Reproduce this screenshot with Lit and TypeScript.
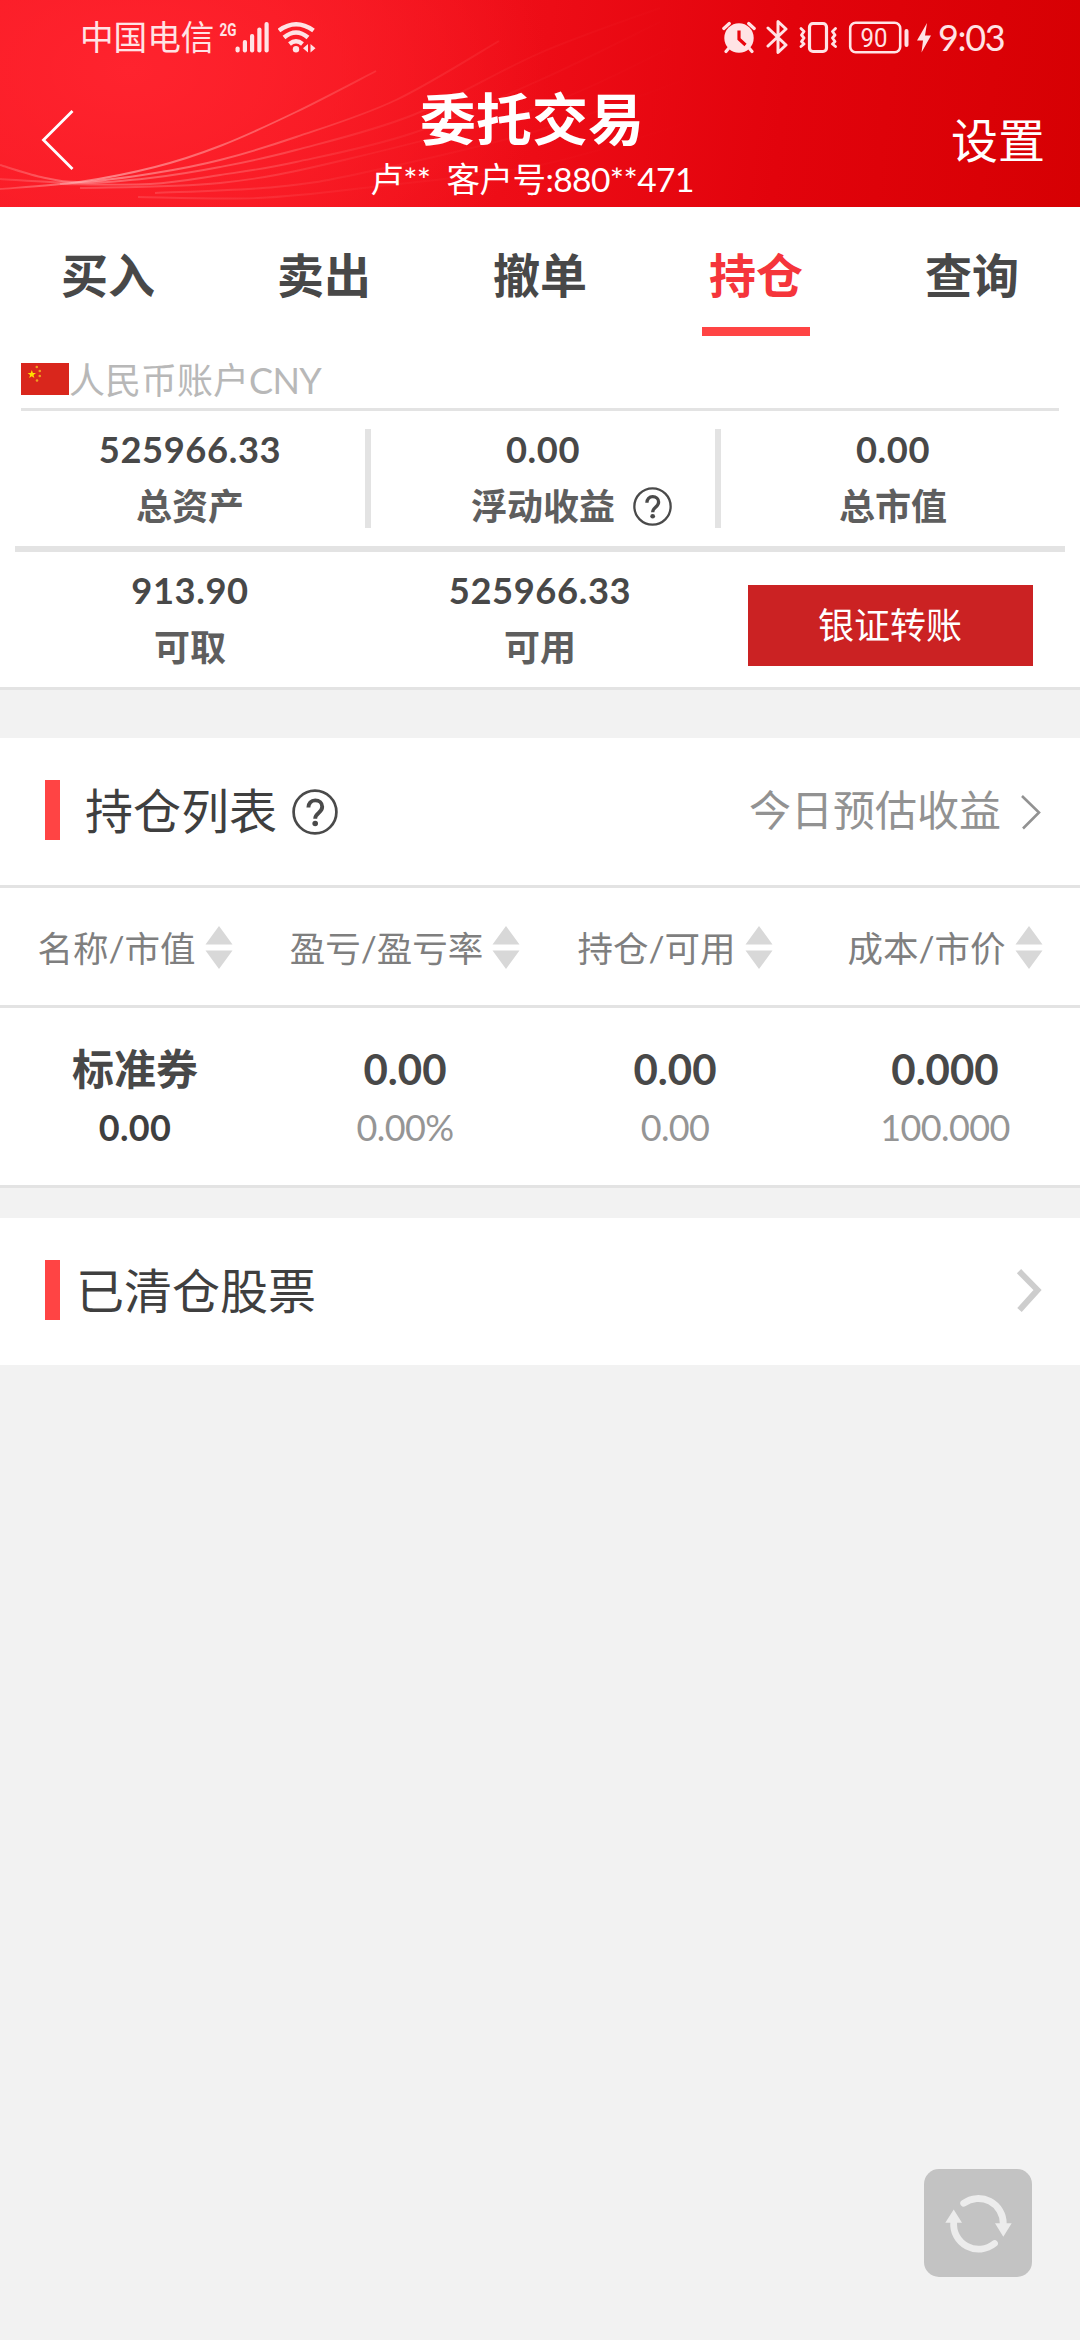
import { LitElement, html, css, svg } from "lit";
import { customElement, property } from "lit/decorators.js";
import { classMap } from "lit/directives/class-map.js";

type Point = [number, number];

/** Smooth path through a list of points (Catmull-Rom as cubic segments). */
function smooth(points: Point[]): string {
  let d = `M${points[0][0]} ${points[0][1]}`;
  for (let i = 0; i < points.length - 1; i++) {
    const p0 = points[Math.max(i - 1, 0)];
    const p1 = points[i];
    const p2 = points[i + 1];
    const p3 = points[Math.min(i + 2, points.length - 1)];
    d += `C${p1[0] + (p2[0] - p0[0]) / 6} ${p1[1] + (p2[1] - p0[1]) / 6} ${p2[0] - (p3[0] - p1[0]) / 6} ${p2[1] - (p3[1] - p1[1]) / 6} ${p2[0]} ${p2[1]}`;
  }
  return d;
}

const WAVES: { points: Point[]; opacity: number }[] = [
  { opacity: 0.6, points: [[0, 189], [79, 182], [155, 167], [220, 146], [296, 112], [376, 71]] },
  { opacity: 0.55, points: [[0, 165], [41, 177], [81, 182], [155, 173], [220, 160], [296, 137], [396, 100], [499, 41]] },
  { opacity: 0.42, points: [[0, 179], [81, 183], [150, 178], [220, 167], [296, 150], [413, 115], [540, 53], [660, 8]] },
  { opacity: 0.35, points: [[60, 184], [150, 184], [220, 175], [296, 162], [413, 133], [540, 80], [660, 22]] },
  { opacity: 0.28, points: [[80, 188], [220, 183], [344, 160], [540, 107], [670, 48]] },
  { opacity: 0.22, points: [[155, 193], [275, 187], [362, 173], [540, 130], [690, 78]] },
  { opacity: 0.18, points: [[138, 197], [258, 198], [372, 187], [540, 165], [690, 122]] },
];

const TABS = ["买入", "卖出", "撤单", "持仓", "查询"];
const COLUMNS = ["名称/市值", "盈亏/盈亏率", "持仓/可用", "成本/市价"];
const HOLDING: [string, string][] = [
  ["标准券", "0.00"],
  ["0.00", "0.00%"],
  ["0.00", "0.00"],
  ["0.000", "100.000"],
];

@customElement("help-icon")
class HelpIcon extends LitElement {
  static styles = css`
    :host { display: block; width: 39px; height: 39px; }
    svg { display: block; width: 100%; height: 100%; }
  `;
  render() {
    return html`<svg viewBox="0 0 46 46" fill="none" stroke="#4a4a4a" stroke-width="2.7">
      <circle cx="23" cy="23" r="21.400" />
      <path d="M16.400 18.600c0-4.400 2.800-7.200 6.800-7.200s7 2.700 7 6.400c0 3-1.700 4.600-3.600 6.200-2.100 1.700-3.400 3.100-3.400 5.800" stroke-width="3.900" />
      <circle cx="23.200" cy="34.500" r="2.800" fill="#4a4a4a" stroke="none" />
    </svg>`;
  }
}

@customElement("status-bar")
class StatusBar extends LitElement {
  static styles = css`
    :host {
      display: flex; height: 74px; box-sizing: border-box; padding: 0 78px 0 80px;
      align-items: center; color: #ffe3e5; font-size: 33.6px; line-height: 74px;
    }
    svg { display: block; flex: none; }
    .net { margin-left: 5px; }
    .wifi { margin-left: 9px; }
    .spacer { flex: 1; }
    .bt { margin-left: 10px; }
    .vib { margin-left: 11px; }
    .bat { margin-left: 11px; }
    .bolt { margin-left: 7px; }
    .time { margin-left: 6px; font-size: 36px; width: 64px; letter-spacing: -1.300px; white-space: nowrap; }
  `;
  render() {
    return html`
      <span>中国电信</span>
      <svg class="net" width="50" height="34" viewBox="220 19 50 34" fill="#ffe3e5">
        <text x="220.500" y="35" font-size="18.500" font-weight="700" font-family="'Roboto','Liberation Sans',sans-serif" textLength="17" lengthAdjust="spacingAndGlyphs">2G</text>
        <rect x="236.500" y="45.500" width="4.200" height="6" rx="2" />
        <rect x="243.800" y="39" width="4.200" height="12.500" rx="2" />
        <rect x="251" y="33" width="4.200" height="18.500" rx="2" />
        <rect x="258.300" y="26.500" width="4.200" height="25" rx="2" />
        <rect x="265.500" y="21" width="4.200" height="30.500" rx="2" />
      </svg>
      <svg class="wifi" width="38" height="34" viewBox="279 19 38 34" fill="none" stroke="#ffe3e5" stroke-width="4.400">
        <path d="M280 29.500Q297 17 314.500 29.500" />
        <path d="M285 36.500Q297 26.500 309 36.500" />
        <path d="M290.500 43Q297 37.500 303.500 43" />
        <circle cx="297" cy="48.300" r="3.200" fill="#ffe3e5" stroke="none" />
        <path d="M309 43v8.500l-5-4.200zM311.500 43v8.500l5-4.200z" fill="#ffe3e5" stroke="none" />
      </svg>
      <div class="spacer"></div>
      <svg width="34" height="34" viewBox="721 19 34 34">
        <circle cx="738" cy="37" r="14.700" fill="#ffe3e5" />
        <path d="M722.800 27.500l5.500-5M753.200 27.500l-5.500-5M727.500 47.500l-2.500 3M748.500 47.500l2.500 3" stroke="#ffe3e5" stroke-width="3.200" stroke-linecap="round" />
        <path d="M738 29.500v8.500l6.500 6" fill="none" stroke="#e9040d" stroke-width="3.200" />
      </svg>
      <svg class="bt" width="22" height="36" viewBox="765 18 22 36" fill="none" stroke="#ffe3e5" stroke-width="3" stroke-linejoin="round" stroke-linecap="round">
        <path d="M767 27l18 17-8 7.500V20.500l8 7.500-18 17" />
      </svg>
      <svg class="vib" width="38" height="34" viewBox="798 19 38 34" fill="none" stroke="#ffe3e5" stroke-width="3.200" stroke-linecap="round" stroke-linejoin="round">
        <rect x="808.500" y="22.500" width="17" height="28" rx="3.500" />
        <path d="M800 27.500l3 3-2.500 3.500 2.500 3-2.500 3.500 2.500 2.500-3 2.500M834.500 27.500l-3 3 2.500 3.500-2.500 3 2.500 3.500-2.500 2.500 3 2.500" stroke-width="2.800" />
      </svg>
      <svg class="bat" width="61" height="34" viewBox="847 19 61 34" fill="none" stroke="#ffe3e5">
        <rect x="849.200" y="21.700" width="50" height="29.600" rx="5.500" stroke-width="2.600" />
        <path d="M905.500 30v14" stroke-width="4" stroke-linecap="round" />
        <text x="859.500" y="46" font-size="26" fill="#ffe3e5" stroke="none" font-family="'Roboto','Noto Sans',sans-serif" textLength="27" lengthAdjust="spacingAndGlyphs">90</text>
      </svg>
      <svg class="bolt" width="16" height="34" viewBox="915 19 16 34" fill="#ffe3e5">
        <path d="M926 22l-10 17.500h6l-1.500 12L930 34.500h-6z" />
      </svg>
      <span class="time">9:03</span>
    `;
  }
}

@customElement("section-title")
class SectionTitle extends LitElement {
  @property() label = "";
  @property({ type: Boolean }) tight = false;
  static styles = css`
    :host { display: flex; align-items: center; height: 147px; box-sizing: border-box; padding: 0 38px 0 45px; background: #fff; color: #3f3f3f; }
    .bar { width: 15px; height: 60px; margin-bottom: 3px; background: #ff4444; }
    .text { margin-left: 25px; margin-bottom: 2px; font-size: 48px; line-height: 60px; white-space: nowrap; }
    .text.tight { margin-left: 16px; }
    .end { margin-left: auto; display: flex; align-items: center; }
  `;
  render() {
    return html`
      <div class="bar"></div>
      <div class=${classMap({ text: true, tight: this.tight })}>${this.label}</div>
      <slot></slot>
      <div class="end"><slot name="end"></slot></div>
    `;
  }
}

@customElement("app-root")
class AppRoot extends LitElement {
  static styles = css`
    :host {
      display: block; position: relative; width: 1080px; height: 2340px; overflow: hidden;
      background: #f2f2f2; color: #484848;
      font-family: "Lato", "Noto Sans CJK SC", sans-serif;
      font-variant-ligatures: none;
    }
    svg { display: block; flex: none; }

    .header {
      position: relative; height: 207px; color: #fff;
      background:
        radial-gradient(ellipse 420px 260px at 130px 70px, #ff232e 0%, rgba(255, 35, 46, 0) 100%),
        linear-gradient(97deg, #f71923 0%, #f5161f 25%, #ed0c16 50%, #e2030c 72%, #d60003 100%);
    }
    .waves { position: absolute; left: 0; top: 0; }
    .top { position: relative; display: flex; flex-direction: column; }
    .nav { display: grid; grid-template-columns: 332px 400px 348px; height: 133px; }
    .back { padding: 35px 0 0 41px; }
    .titles { display: flex; flex-direction: column; align-items: center; padding-top: 12px; white-space: nowrap; }
    .title { font-size: 56px; font-weight: 700; line-height: 66px; }
    .sub { font-size: 33.600px; line-height: 40px; margin-top: 7px; white-space: pre; letter-spacing: -0.600px; }
    .settings { justify-self: end; padding: 36px 35px 0 0; font-size: 47px; line-height: 60px; }

    .account-panel { background: #fff; border-bottom: 3px solid #e3e3e3; }
    .tabs { display: grid; grid-template-columns: repeat(5, 1fr); height: 129px; }
    .tab { display: flex; flex-direction: column; align-items: center; padding-top: 20px; font-size: 47px; font-weight: 700; line-height: 96px; }
    .tab.active { color: #f5353b; }
    .tab .line { width: 108px; height: 9px; margin-top: 4px; }
    .tab.active .line { background: #ff4444; }

    .account { display: flex; align-items: center; height: 57px; margin: 0 21px; padding-top: 15px; border-bottom: 3px solid #e3e3e3; font-size: 36px; line-height: 56px; color: #b8b8b8; }
    .account svg { margin-bottom: 2px; }
    .account .latin { letter-spacing: -0.600px; }
    .stats { display: grid; grid-template-columns: repeat(3, 1fr); margin: 0 15px; padding: 18px 0; height: 99px; text-align: center; }
    .stats.upper { border-bottom: 6px solid #e3e3e3; }
    .stats.upper .cell + .cell { border-left: 6px solid #e3e3e3; }
    .num { font-size: 36.300px; font-weight: 700; line-height: 41px; letter-spacing: 0.600px; }
    .lab { display: grid; grid-template-columns: 1fr auto 1fr; margin-top: 15px; font-size: 36px; font-weight: 700; line-height: 42px; color: #5e5e5e; align-items: center; }
    .lab .mid { grid-column: 2; }
    .lab help-icon { margin-left: 18px; }
    .transfer { margin-top: 15px; justify-self: center; width: 285px; height: 81px; background: #cb2223; color: #fff; font-size: 36px; line-height: 81px; }

    .holdings { margin-top: 48px; background: #fff; border-bottom: 3px solid #e3e3e3; }
    .holdings help-icon { width: 46px; height: 46px; margin-left: 15px; }
    .estimate { font-size: 42px; line-height: 60px; color: #929292; margin-top: -3px; }
    .chev { margin-left: 19px; }
    .grid { display: grid; grid-template-columns: repeat(4, 270px); }
    .heads { border-top: 3px solid #e3e3e3; border-bottom: 3px solid #e3e3e3; height: 117px; align-items: center; color: #7f7f7f; font-size: 35.500px; }
    .head { display: flex; align-items: center; justify-content: center; gap: 9px; }
    .head svg { margin-top: 2px; }
    .values { height: 144px; padding-top: 33px; text-align: center; }
    .first { font-size: 42px; font-weight: 700; line-height: 56px; }
    .second { margin-top: 2px; font-size: 36px; line-height: 56px; color: #959595; letter-spacing: -0.600px; }
    .second.strong { font-weight: 700; color: #3f3f3f; letter-spacing: 0.300px; }
    .cleared { margin-top: 30px; }
    .chev-light { margin-bottom: 2px; margin-right: -1px; }

    .refresh { position: absolute; left: 924px; top: 2169px; width: 108px; height: 108px; border-radius: 15px; background: #c3c3c3; }
  `;

  private stat(value: string, label: string, help = false) {
    return html`<div class="cell">
      <div class="num">${value}</div>
      <div class="lab"><span class="mid">${label}</span>${help ? html`<help-icon></help-icon>` : ""}</div>
    </div>`;
  }

  render() {
    return html`
      <div class="header">
        <svg class="waves" width="1080" height="207" viewBox="0 0 1080 207" fill="none">
          <defs>
            <linearGradient id="fade" gradientUnits="userSpaceOnUse" x1="0" y1="0" x2="700" y2="0">
              <stop offset="0" stop-color="#ffb0b0" stop-opacity="0.450" />
              <stop offset="0.150" stop-color="#ffc4c4" stop-opacity="1" />
              <stop offset="0.400" stop-color="#ff9090" stop-opacity="0.850" />
              <stop offset="0.530" stop-color="#ff7070" stop-opacity="0.450" />
              <stop offset="1" stop-color="#ff5050" stop-opacity="0" />
            </linearGradient>
          </defs>
          ${WAVES.map((w) => svg`<path d=${smooth(w.points)} stroke="url(#fade)" stroke-width="1.900" opacity=${w.opacity} />`)}
        </svg>
        <div class="top">
          <status-bar></status-bar>
          <div class="nav">
            <div class="back">
              <svg width="34" height="62" viewBox="0 0 34 62" fill="none" stroke="#fff" stroke-width="2.800">
                <path d="M31.500 2L2.500 31l29 29" />
              </svg>
            </div>
            <div class="titles">
              <div class="title">委托交易</div>
              <div class="sub">卢**  客户号:880**471</div>
            </div>
            <div class="settings">设置</div>
          </div>
        </div>
      </div>

      <div class="account-panel">
        <div class="tabs">
          ${TABS.map((t) => html`<div class=${classMap({ tab: true, active: t === "持仓" })}>${t}<div class="line"></div></div>`)}
        </div>
        <div class="account">
          <svg width="48" height="32" viewBox="0 0 48 32">
            <rect width="48" height="32" fill="#d9261c" />
            <path d="M10.800 7l1.100 3h3.100l-2.500 1.900.9 3.100-2.600-1.800L8.200 15l.9-3.100L6.600 10h3.100z" fill="#ffde00" />
            <g fill="#f0a020">
              <circle cx="15.800" cy="4" r="1.300" /><circle cx="18.800" cy="8" r="1.300" />
              <circle cx="18.800" cy="13" r="1.300" /><circle cx="16" cy="17.500" r="1.300" />
            </g>
          </svg>
          <span>人民币账户<span class="latin">CNY</span></span>
        </div>
        <div class="stats upper">
          ${this.stat("525966.33", "总资产")} ${this.stat("0.00", "浮动收益", true)} ${this.stat("0.00", "总市值")}
        </div>
        <div class="stats">
          ${this.stat("913.90", "可取")} ${this.stat("525966.33", "可用")}
          <div class="transfer">银证转账</div>
        </div>
      </div>

      <div class="holdings">
        <section-title label="持仓列表">
          <help-icon></help-icon>
          <span slot="end" class="estimate">今日预估收益</span>
          <svg slot="end" class="chev" width="22" height="36" viewBox="0 0 22 36" fill="none" stroke="#929292" stroke-width="2.600">
            <path d="M2 2l17 16.500L3 34.500" />
          </svg>
        </section-title>
        <div class="grid heads">
          ${COLUMNS.map((c) => html`<div class="head"><span>${c}</span>
            <svg width="28" height="43" viewBox="0 0 28 43" fill="#d8d8d8"><path d="M14 0l13.500 18.500H.5zM14 43l13.500-18.500H.5z" /></svg>
          </div>`)}
        </div>
        <div class="grid values">
          ${HOLDING.map(([a, b], i) => html`<div>
            <div class="first">${a}</div>
            <div class=${classMap({ second: true, strong: i === 0 })}>${b}</div>
          </div>`)}
        </div>
      </div>

      <section-title class="cleared" label="已清仓股票" tight>
        <svg slot="end" class="chev-light" width="28" height="44" viewBox="0 0 28 44" fill="none" stroke="#cdcdcd" stroke-width="6">
          <path d="M4 2.200L22.500 21 4.500 41" />
        </svg>
      </section-title>

      <div class="refresh">
        <svg width="108" height="108" viewBox="0 0 108 108" fill="none" stroke="#ececec" stroke-width="6.800" stroke-linecap="round">
          <path d="M39.700 34.200A25 25 0 0 1 79.300 55" />
          <path d="M70.500 74.500A25 25 0 0 1 29.700 53" />
          <path d="M71 54.300h16.700l-8.400 13.500zM21.300 53.700H38l-8.300-13.200z" fill="#ececec" stroke="none" />
        </svg>
      </div>
    `;
  }
}
